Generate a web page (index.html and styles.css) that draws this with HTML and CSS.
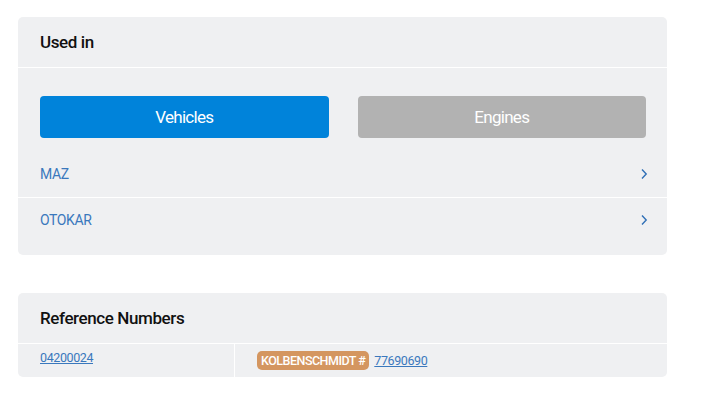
FILE: index.html
```html
<!DOCTYPE html>
<html>
<head>
<meta charset="utf-8">
<link rel="stylesheet" href="styles.css">
</head>
<body>
<div class="page">
  <section class="card">
    <div class="card-head">Used in</div>
    <div class="card-body">
      <div class="tabs">
        <button class="tab tab-active">Vehicles</button>
        <button class="tab tab-off">Engines</button>
      </div>
    </div>
    <ul class="makes">
      <li class="make"><a class="make-link">MAZ</a>
        <svg class="chev" width="8" height="12" viewBox="0 0 8 12"><path d="M2 1.5 L6.2 6 L2 10.5" fill="none" stroke="#2f6fb6" stroke-width="1.4"/></svg>
      </li>
      <li class="make"><a class="make-link">OTOKAR</a>
        <svg class="chev" width="8" height="12" viewBox="0 0 8 12"><path d="M2 1.5 L6.2 6 L2 10.5" fill="none" stroke="#2f6fb6" stroke-width="1.4"/></svg>
      </li>
    </ul>
  </section>

  <section class="card card-ref">
    <div class="card-head">Reference Numbers</div>
    <div class="ref-row">
      <div class="ref-cell ref-own"><a class="num">04200024</a></div>
      <div class="ref-cell ref-cross"><span class="badge">KOLBENSCHMIDT #</span><a class="num">77690690</a></div>
    </div>
  </section>
</div>
</body>
</html>
```

FILE: styles.css
```css
* { box-sizing: border-box; }
body {
  margin: 0;
  background: #fff;
  font-family: Roboto, "Liberation Sans", sans-serif;
  color: #111;
}
.page {
  padding: 17px 52px 0 18px;
  display: flex;
  flex-direction: column;
  gap: 38px;
}
.card {
  background: #eff0f2;
  border-radius: 5px;
  width: 649px;
}
.card-head {
  height: 51px;
  padding: 0 22px 1px;
  display: flex;
  align-items: center;
  font-size: 17px;
  font-weight: 500;
  letter-spacing: -0.4px;
  border-bottom: 1px solid #fff;
}
.card-body {
  padding: 28px 21px 0 22px;
}
.tabs {
  display: grid;
  grid-template-columns: 1fr 1fr;
  gap: 29px;
}
.tab {
  height: 42px;
  border: 0;
  border-radius: 4px;
  color: #fff;
  font-family: inherit;
  font-size: 17px;
  letter-spacing: -0.7px;
  padding: 0;
}
.tab-active { background: #0083da; }
.tab-off { background: #b2b2b2; }
.makes {
  list-style: none;
  margin: 13px 0 0;
  padding: 0 0 13px;
}
.make {
  height: 46px;
  padding: 0 19px 0 22px;
  display: flex;
  align-items: center;
  justify-content: space-between;
}
.make + .make { border-top: 1px solid #fff; height: 45px; }
.make-link {
  color: #3a78bd;
  font-size: 14px;
  letter-spacing: -0.4px;
}
.ref-row {
  display: grid;
  grid-template-columns: 216px 1fr;
  height: 33px;
}
.ref-cell {
  padding: 6px 22px 0;
  display: flex;
  align-items: flex-start;
}
.ref-cross {
  border-left: 1px solid #fff;
  padding-top: 7px;
  gap: 5px;
}
.num {
  color: #3a78bd;
  font-size: 12.5px;
  letter-spacing: -0.4px;
  text-decoration: underline;
}
.ref-cross .num { padding-top: 2px; }
.badge {
  background: #d49660;
  color: #fff;
  border-radius: 5px;
  padding: 1px 4px;
  font-size: 12.5px;
  font-weight: 500;
  letter-spacing: -0.5px;
  line-height: 17px;
}
```
